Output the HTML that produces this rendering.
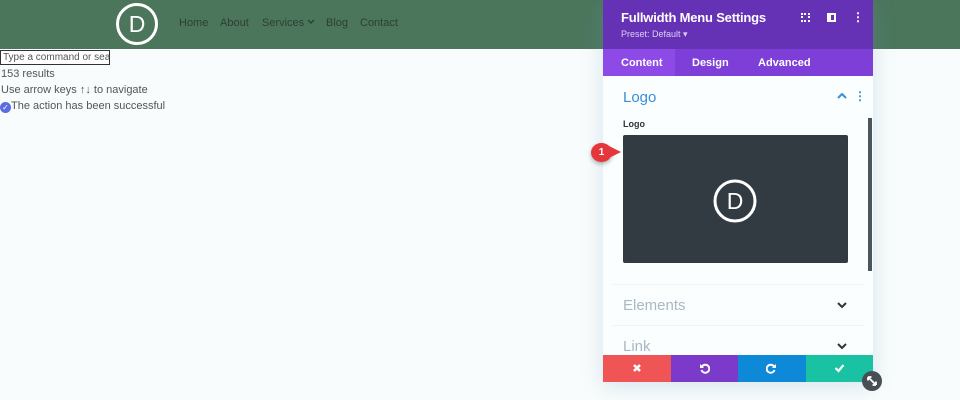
<!DOCTYPE html>
<html><head><style>
*{margin:0;padding:0;box-sizing:border-box}
body{width:960px;height:400px;overflow:hidden;background:#f8fcfc;font-family:"Liberation Sans",sans-serif;position:relative}
.hdr{position:absolute;left:0;top:0;width:960px;height:49px;background:#4b765c}
.nav{position:absolute;top:17px;font-size:11px;color:#2c3f33}
.a{position:absolute;font-size:11px;color:#555;left:1px}
.panel{position:absolute;left:603px;top:0;width:270px;height:382px;background:#fbfeff;box-shadow:0 4px 20px rgba(120,160,200,.25)}
.ph{height:49px;background:#6632b5;color:#fff;position:relative}
.tabs{height:27px;background:#7d3fd8;position:relative;color:#fff;font-size:11px;font-weight:bold}
.tabs span{position:absolute;top:8px}
.sec{position:absolute;left:20px;font-size:15px}
.line{position:absolute;left:10px;width:252px;height:1px;background:#eef3f6}
.btn{position:absolute;top:355px;height:27px;width:67.5px;color:#fff;text-align:center}
.btn svg{margin-top:8px}
.chev{position:absolute;left:234px}
</style></head><body>
<div class="hdr">
<svg style="position:absolute;left:115px;top:2px" width="44" height="44"><circle cx="22" cy="22" r="19.5" fill="none" stroke="#fff" stroke-width="3"/><text x="22" y="30" text-anchor="middle" fill="#fff" font-size="23" font-family="Liberation Sans">D</text></svg>
<span class="nav" style="left:179px">Home</span><span class="nav" style="left:220px">About</span><span class="nav" style="left:262px">Services <svg width="8" height="6" style="vertical-align:1px"><path d="M1 1l3 3 3-3" fill="none" stroke="#2c3f33" stroke-width="1.5"/></svg></span><span class="nav" style="left:326px">Blog</span><span class="nav" style="left:360px">Contact</span>
</div>
<div style="position:absolute;left:0;top:50px;width:110px;height:15px;border:1px solid #333;background:#fff;font-size:10px;color:#555;padding-left:2px;line-height:13px;overflow:hidden;white-space:nowrap">Type a command or search</div>
<div class="a" style="top:68px">153 results</div>
<div class="a" style="top:84px">Use arrow keys ↑↓ to navigate</div>
<div class="a" style="top:100px;left:0"><span style="display:inline-block;width:11px;height:11px;border-radius:50%;background:#5b6be0;color:#fff;font-size:8px;text-align:center;line-height:11px;vertical-align:-1px">✓</span>The action has been successful</div>
<div class="panel">
<div class="ph"><div style="position:absolute;left:18px;top:10px;font-size:13px;font-weight:bold;letter-spacing:-0.2px">Fullwidth Menu Settings</div>
<div style="position:absolute;left:18px;top:29px;font-size:9px;color:#ddd0f3">Preset: Default ▾</div>
<div style="position:absolute;left:198px;top:13px;width:9px;height:9px;border:2px dotted #fff"></div>
<div style="position:absolute;left:224px;top:13px;width:9px;height:9px;border:2px solid #fff;border-left-width:4px"></div>
<div style="position:absolute;left:249px;top:10px;font-size:12px;font-weight:bold">⋮</div></div>
<div class="tabs"><div style="position:absolute;left:0;top:0;width:72px;height:27px;background:#8e4ae6"></div><span style="left:18px">Content</span><span style="left:89px">Design</span><span style="left:155px">Advanced</span></div>
<div class="sec" style="top:89px;color:#3b8ed6">Logo</div>
<svg class="chev" style="top:93px" width="10" height="7"><path d="M1 5l4-4 4 4" fill="none" stroke="#3b8ed6" stroke-width="2"/></svg>
<div style="position:absolute;left:251px;top:89px;color:#3b8ed6;font-size:12px;font-weight:bold">⋮</div>
<div style="position:absolute;left:20px;top:119px;font-size:9px;font-weight:bold;color:#333">Logo</div>
<div style="position:absolute;left:20px;top:135px;width:225px;height:128px;background:#323b42;border-radius:2px">
<svg style="position:absolute;left:90px;top:44px" width="44" height="44"><circle cx="22" cy="22" r="20" fill="none" stroke="#fff" stroke-width="3"/><text x="22" y="30" text-anchor="middle" fill="#fff" font-size="23" font-family="Liberation Sans">D</text></svg></div>
<div style="position:absolute;left:265px;top:118px;width:4px;height:153px;background:#4b555c"></div>
<div class="line" style="top:284px"></div>
<div class="sec" style="top:297px;color:#a9b8c2">Elements</div>
<svg class="chev" style="top:302px" width="10" height="7"><path d="M1 1l4 4 4-4" fill="none" stroke="#333" stroke-width="2"/></svg>
<div class="line" style="top:325px"></div>
<div class="sec" style="top:338px;color:#a9b8c2">Link</div>
<svg class="chev" style="top:343px" width="10" height="7"><path d="M1 1l4 4 4-4" fill="none" stroke="#333" stroke-width="2"/></svg>
</div>
<div class="btn" style="left:603px;background:#ef5555"><svg width="10" height="10"><path d="M2 2l6 6M8 2l-6 6" stroke="#fff" stroke-width="2.5"/></svg></div>
<div class="btn" style="left:670.5px;background:#7b3ac9"><svg width="11" height="11"><path d="M3 3.5A4 4 0 1 1 2.5 7" fill="none" stroke="#fff" stroke-width="2"/><path d="M1 1v4h4z" fill="#fff"/></svg></div>
<div class="btn" style="left:738px;background:#0d89d8"><svg width="11" height="11"><path d="M8 3.5A4 4 0 1 0 8.5 7" fill="none" stroke="#fff" stroke-width="2"/><path d="M10 1v4H6z" fill="#fff"/></svg></div>
<div class="btn" style="left:805.5px;background:#19c2a3"><svg width="11" height="10"><path d="M1.5 5l3 3 5-6" fill="none" stroke="#fff" stroke-width="2.2"/></svg></div>
<div style="position:absolute;left:862px;top:371px;width:20px;height:20px;border-radius:50%;background:#474f55"><svg width="20" height="20"><path d="M6 6l8 8M6 6h3.5M6 6v3.5M14 14h-3.5M14 14v-3.5" stroke="#fff" stroke-width="1.8" fill="none"/></svg></div>
<div style="position:absolute;left:591px;top:143px;width:21px;height:19px;border-radius:50%;background:#e5373b;color:#fff;font-size:10px;font-weight:bold;text-align:center;line-height:19px;box-shadow:0 2px 4px rgba(0,0,0,.3)">1</div>
<div style="position:absolute;left:609px;top:146px;width:0;height:0;border-top:6px solid transparent;border-bottom:6px solid transparent;border-left:12px solid #e5373b"></div>
</body></html>
